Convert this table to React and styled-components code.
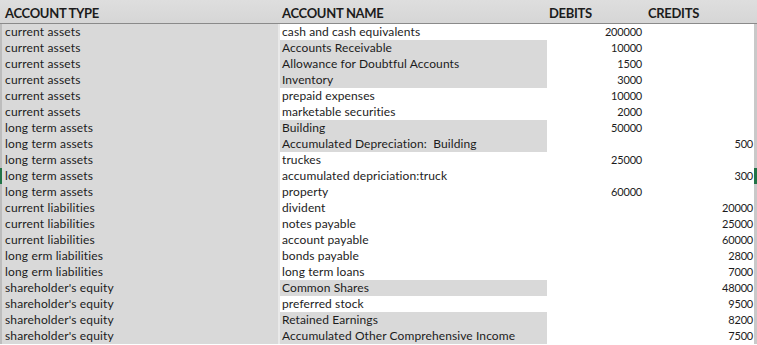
import React from 'react';
import styled, { createGlobalStyle } from 'styled-components';

const GlobalStyle = createGlobalStyle`
  body {
    margin: 0;
    background: #ffffff;
    font-family: Lato, "Liberation Sans", sans-serif;
    color: #1c1c1c;
  }
`;

const COLS = '2px 276px 2px 267px 98px 109px 3px';

const Sheet = styled('div')`
  width: 757px;
  height: 345px;
  overflow: hidden;
  display: flex;
  flex-direction: column;
`;

const HeaderRow = styled('div')`
  display: grid;
  grid-template-columns: ${COLS};
  height: 23px;
  background: linear-gradient(#dedede, #d6d6d6);
  border-bottom: 1px solid #8a8a8a;
  align-items: end;
`;

const HeadCell = styled('div')`
  font-weight: 700;
  font-size: 13px;
  padding-bottom: 2px;
  padding-left: ${props => props.pad || 0}px;
  letter-spacing: -0.3px;
  white-space: nowrap;
`;

const Row = styled('div')`
  display: grid;
  grid-template-columns: ${COLS};
  height: 16px;
  align-items: stretch;
`;

const Edge = styled('div')`
  background: ${props => props.selected ? '#217346' : '#bdbdbd'};
`;

const TypeCell = styled('div')`
  background: #d9d9d9;
  font-size: 12px;
  line-height: 16px;
  padding-left: 3px;
  letter-spacing: 0.15px;
  white-space: nowrap;
`;

const Gap = styled('div')`
  background: #e9e9e9;
`;

const NameCell = styled('div')`
  background: ${props => props.shaded ? '#d9d9d9' : '#ffffff'};
  font-size: 12px;
  line-height: 16px;
  padding-left: 2px;
  letter-spacing: 0.1px;
  white-space: pre;
`;

const NumCell = styled('div')`
  font-size: 11px;
  line-height: 16px;
  text-align: right;
  letter-spacing: -0.2px;
  padding-right: ${props => props.pad}px;
`;

const Strip = styled('div')`
  background: ${props => props.selected ? '#217346' : '#c9c9c9'};
`;

const rows = [
  ['current assets', 'cash and cash equivalents', '200000', '', false],
  ['current assets', 'Accounts Receivable', '10000', '', true],
  ['current assets', 'Allowance for Doubtful Accounts', '1500', '', true],
  ['current assets', 'Inventory', '3000', '', true],
  ['current assets', 'prepaid expenses', '10000', '', false],
  ['current assets', 'marketable securities', '2000', '', false],
  ['long term assets', 'Building', '50000', '', true],
  ['long term assets', 'Accumulated Depreciation:  Building', '', '500', true],
  ['long term assets', 'truckes', '25000', '', false],
  ['long term assets', 'accumulated depriciation:truck', '', '300', false],
  ['long term assets', 'property', '60000', '', false],
  ['current liabilities', 'divident', '', '20000', false],
  ['current liabilities', 'notes payable', '', '25000', false],
  ['current liabilities', 'account payable', '', '60000', false],
  ['long erm liabilities', 'bonds payable', '', '2800', false],
  ['long erm liabilities', 'long term loans', '', '7000', false],
  ["shareholder's equity", 'Common Shares', '', '48000', true],
  ["shareholder's equity", 'preferred stock', '', '9500', false],
  ["shareholder's equity", 'Retained Earnings', '', '8200', true],
  ["shareholder's equity", 'Accumulated Other Comprehensive Income', '', '7500', true],
];

const SELECTED = 9;

export default function App() {
  return (
    <Sheet>
      <GlobalStyle />
      <HeaderRow>
        <div />
        <HeadCell pad={3}>ACCOUNT TYPE</HeadCell>
        <div />
        <HeadCell pad={2}>ACCOUNT NAME</HeadCell>
        <HeadCell pad={2}>DEBITS</HeadCell>
        <HeadCell pad={3}>CREDITS</HeadCell>
        <div />
      </HeaderRow>
      {rows.map(([type, name, debit, credit, shaded], i) => (
        <Row key={i}>
          <Edge selected={i === SELECTED} />
          <TypeCell>{type}</TypeCell>
          <Gap />
          <NameCell shaded={shaded}>{name}</NameCell>
          <NumCell pad={3}>{debit}</NumCell>
          <NumCell pad={1}>{credit}</NumCell>
          <Strip selected={i === SELECTED} />
        </Row>
      ))}
    </Sheet>
  );
}
